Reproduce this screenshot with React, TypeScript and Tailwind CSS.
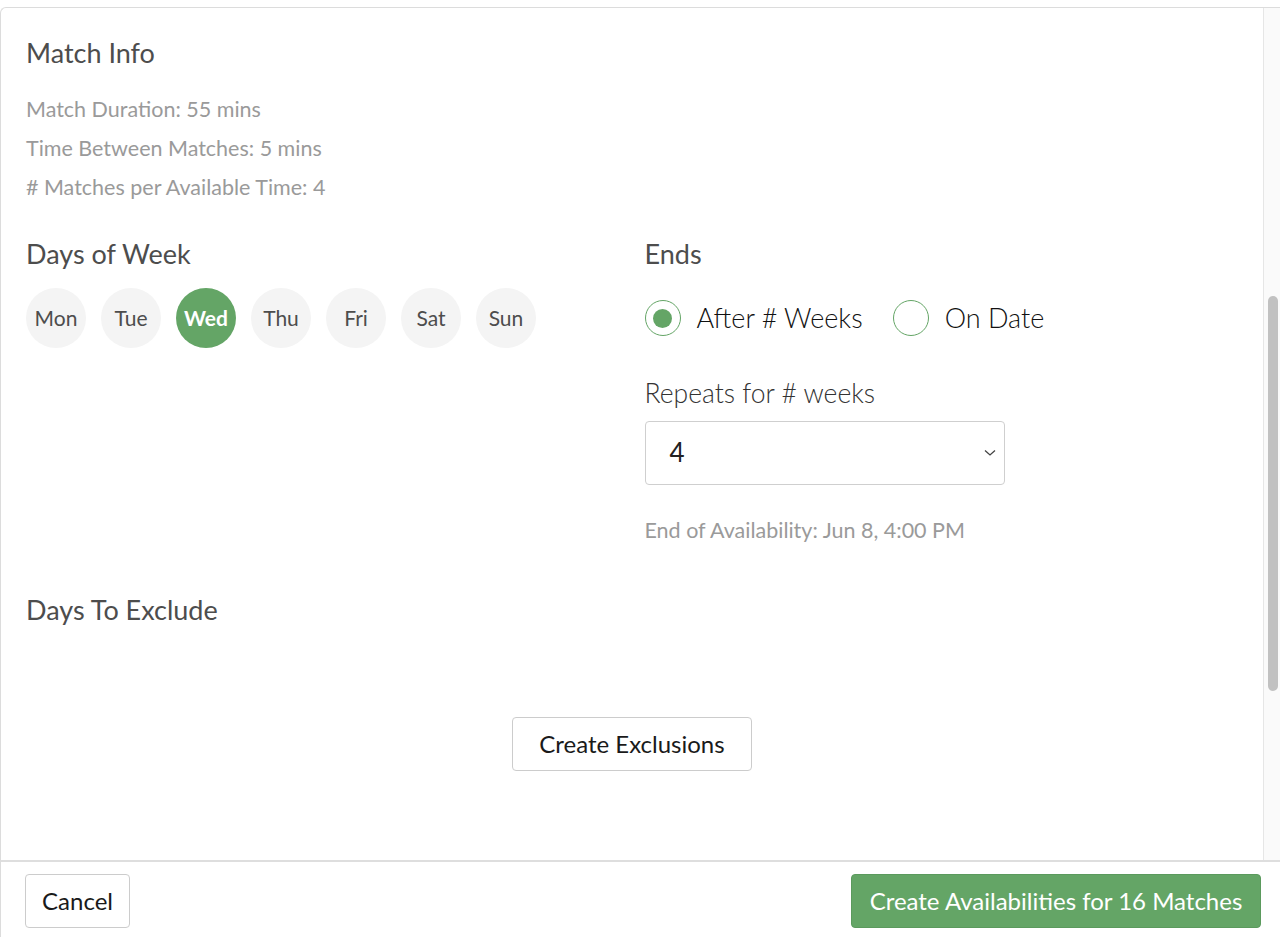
import React, { useState } from 'react';

const days = ['Mon', 'Tue', 'Wed', 'Thu', 'Fri', 'Sat', 'Sun'];

const Radio = ({ checked, label }: { checked: boolean; label: string }) => (
  <label className="flex items-center gap-[16px] cursor-pointer">
    <span className="w-[36px] h-[36px] rounded-full border-[1.5px] border-[#64a566] flex items-center justify-center">
      {checked && <span className="w-[19px] h-[19px] rounded-full bg-[#64a566]" />}
    </span>
    <span className="text-[27px] font-light text-[#111]">{label}</span>
  </label>
);

export default function App() {
  const [selected, setSelected] = useState(['Wed']);

  return (
    <div className="w-[1280px] h-[937px] bg-white overflow-hidden flex flex-col font-['Lato','Liberation_Sans',sans-serif]">
      <div className="h-[7px] shrink-0" />
      <div className="flex-1 flex flex-col border-t border-l border-[#dcdcdc] rounded-tl-md min-h-0">
        {/* Scrollable body */}
        <div className="flex-1 flex min-h-0">
          <div className="flex-1 px-[25px] pt-[28px]">
            <h2 className="text-[27px] leading-[34px] text-[#4d4d4d]">Match Info</h2>
            <div className="mt-[26px] flex flex-col gap-[13px] text-[21.5px] leading-[26px] text-[#9a9a9a]">
              <p>Match Duration: 55 mins</p>
              <p>Time Between Matches: 5 mins</p>
              <p># Matches per Available Time: 4</p>
            </div>

            <div className="grid grid-cols-2 gap-x-[25px] mt-[37px]">
              <div>
                <h2 className="text-[27px] leading-[34px] text-[#4d4d4d]">Days of Week</h2>
                <div className="flex gap-[15px] mt-[17px]">
                  {days.map((d) => {
                    const on = selected.includes(d);
                    return (
                      <button
                        key={d}
                        onClick={() => setSelected(on ? selected.filter((x) => x !== d) : [...selected, d])}
                        className={`w-[60px] h-[60px] rounded-full flex items-center justify-center text-[21px] ${
                          on ? 'bg-[#64a566] text-white font-bold' : 'bg-[#f4f4f4] text-[#4d4d4d]'
                        }`}
                      >
                        {d}
                      </button>
                    );
                  })}
                </div>
              </div>

              <div>
                <h2 className="text-[27px] leading-[34px] text-[#4d4d4d]">Ends</h2>
                <div className="flex items-center gap-[30px] mt-[27px]">
                  <Radio checked label="After # Weeks" />
                  <Radio checked={false} label="On Date" />
                </div>
                <p className="mt-[38px] text-[26.5px] leading-[32px] font-light text-[#333]">Repeats for # weeks</p>
                <div className="mt-[12px] w-[360px] h-[64px] border border-[#cfcfcf] rounded-[4px] flex items-center justify-between pl-[24px] pr-[7px]">
                  <span className="text-[26px] text-[#222]">4</span>
                  <svg width="14" height="9" viewBox="0 0 14 9" fill="none" stroke="#444" strokeWidth="1.3">
                    <path d="M2 2.5l5 4.5 5-4.5" />
                  </svg>
                </div>
                <p className="mt-[32px] text-[21.5px] leading-[26px] text-[#9a9a9a]">End of Availability: Jun 8, 4:00 PM</p>
              </div>
            </div>

            <h2 className="mt-[50px] text-[27px] leading-[34px] text-[#4d4d4d]">Days To Exclude</h2>
            <div className="flex justify-center mt-[90px]">
              <button className="w-[240px] h-[54px] border border-[#cccccc] rounded-[4px] text-[24px] text-[#1a1a1a] bg-white">
                Create Exclusions
              </button>
            </div>
          </div>

          {/* Scrollbar */}
          <div className="w-[17px] shrink-0 border-l border-[#e6e6e6] bg-[#fafafa] pt-[288px]">
            <div className="ml-[4px] w-[10px] h-[395px] rounded-full bg-[#c1c1c1]" />
          </div>
        </div>

        {/* Footer */}
        <div className="h-[77px] shrink-0 border-t-2 border-[#dedede] flex items-start justify-between pl-[24px] pr-[19px] pt-[12px]">
          <button className="w-[105px] h-[54px] border border-[#cccccc] rounded-[4px] text-[24px] text-[#1a1a1a] bg-white">
            Cancel
          </button>
          <button className="w-[410px] h-[54px] border border-[#5b9a5d] rounded-[4px] text-[24px] text-white bg-[#64a566]">
            Create Availabilities for 16 Matches
          </button>
        </div>
      </div>
    </div>
  );
}
